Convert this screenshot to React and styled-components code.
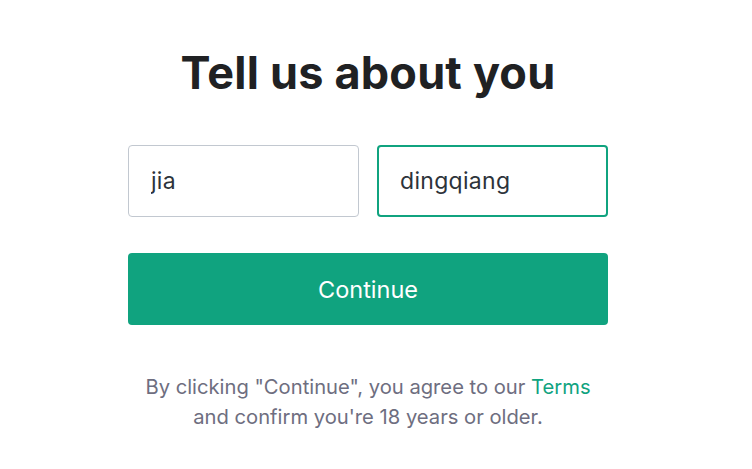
import React from "react";
import styled, { createGlobalStyle } from "styled-components";

const GlobalStyle = createGlobalStyle`
  html, body {
    margin: 0;
    padding: 0;
    background: #ffffff;
  }
  body {
    font-family: Inter, "Noto Sans", sans-serif;
  }
`;

const Page = styled.main`
  width: 736px;
  display: flex;
  flex-direction: column;
  align-items: center;
  padding-top: 43px;
`;

const Title = styled.h1`
  margin: 0 0 42px;
  font-size: 45px;
  line-height: 60px;
  font-weight: 700;
  color: #202123;
  letter-spacing: 0.2px;
`;

const Form = styled.form`
  width: 480px;
  display: flex;
  flex-direction: column;
  gap: 36px;
`;

const Row = styled.div`
  display: grid;
  grid-template-columns: 1fr 1fr;
  gap: 18px;
`;

const Field = styled.input`
  box-sizing: border-box;
  width: 100%;
  height: 72px;
  padding: 0 0 0 ${(p) => (p.$focused ? "21px" : "22px")};
  border: ${(p) => (p.$focused ? "2px solid #10a37f" : "1px solid #c2c8d0")};
  border-radius: 4px;
  font-family: inherit;
  font-size: 23px;
  letter-spacing: 0.3px;
  color: #2d333a;
  outline: none;
  background: #fff;
`;

const Button = styled.button`
  height: 72px;
  border: none;
  border-radius: 4px;
  background: #10a37f;
  color: #ffffff;
  font-family: inherit;
  font-size: 23.5px;
  cursor: pointer;
`;

const Note = styled.p`
  margin: 47px 0 0;
  text-align: center;
  font-size: 20.2px;
  line-height: 30px;
  color: #6e6e80;
`;

const Link = styled.a`
  color: #10a37f;
  text-decoration: none;
`;

export default function App() {
  return (
    <>
      <GlobalStyle />
      <Page>
        <Title>Tell us about you</Title>
        <Form onSubmit={(e) => e.preventDefault()}>
          <Row>
            <Field defaultValue="jia" />
            <Field defaultValue="dingqiang" $focused />
          </Row>
          <Button type="submit">Continue</Button>
        </Form>
        <Note>
          By clicking "Continue", you agree to our <Link href="#">Terms</Link>
          <br />
          and confirm you're 18 years or older.
        </Note>
      </Page>
    </>
  );
}
